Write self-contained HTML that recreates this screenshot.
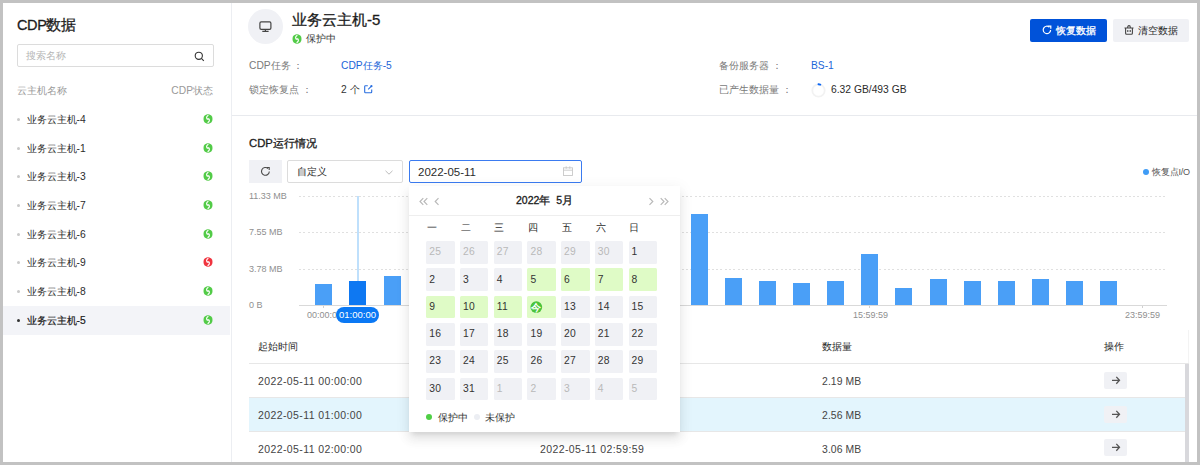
<!DOCTYPE html>
<html><head><meta charset="utf-8">
<style>
*{margin:0;padding:0;box-sizing:border-box;}
html,body{width:1200px;height:465px;overflow:hidden;background:#fff;}
body{font-family:"Liberation Sans",sans-serif;color:#1c1c1c;position:relative;}
.a{position:absolute;white-space:nowrap;line-height:12px;}
.bd{position:absolute;background:#c2c2c2;z-index:50;}
.t1{font-size:15px;font-weight:400;line-height:18px;-webkit-text-stroke:0.3px #1c1c1c;}
.md{-webkit-text-stroke:0.3px currentColor;}
.grey{color:#7a7a7a;}
.blue{color:#1b65d8;}
.s10{font-size:10.25px;}
.s11{font-size:10.5px;letter-spacing:0.4px;}
.dot{position:absolute;width:3px;height:3px;border-radius:50%;background:#cacaca;}
.nm{font-size:10.3px;color:#2b2b2b;}
.cell{position:absolute;width:28.5px;height:22.5px;background:#f0f1f5;border-radius:1.5px;font-size:10.3px;letter-spacing:0.3px;line-height:12px;color:#333;padding:5.2px 0 0 3px;}
.cell.g{background:#dffbc6;}
.cell.o{color:#b9b9b9;}
.bar{position:absolute;width:17px;background:#4a9ff7;}
.hl{position:absolute;height:1px;background:#e7e7e7;}
.arr{position:absolute;width:23px;height:17px;background:#f0f1f5;border-radius:2px;}
.arr svg{position:absolute;left:6px;top:3px;}
.grid{position:absolute;left:299px;width:868px;height:1px;background:repeating-linear-gradient(90deg,#e0e0e0 0 2px,transparent 2px 4.3px);}
.yl{position:absolute;font-size:9px;color:#8f8f8f;line-height:11px;white-space:nowrap;}
</style></head>
<body>
<!-- grey frame -->
<div class="bd" style="left:0;top:0;width:1200px;height:3px;"></div>
<div class="bd" style="left:0;top:462px;width:1200px;height:3px;"></div>
<div class="bd" style="left:0;top:0;width:3px;height:465px;"></div>
<div class="bd" style="left:1197px;top:0;width:3px;height:465px;"></div>

<!-- SIDEBAR -->
<div class="a" style="left:231px;top:3px;width:1px;height:459px;background:#eceef2;"></div>
<div class="a t1" style="left:17px;top:15.5px;font-size:14.5px;"><span style="letter-spacing:-0.4px">CDP</span>数据</div>
<div class="a" style="left:17px;top:44px;width:197px;height:23px;border:1px solid #dcdcdc;border-radius:2px;"></div>
<div class="a s10" style="left:26px;top:50px;color:#b5b5b5;">搜索名称</div>
<svg class="a" style="left:194px;top:50.5px;" width="11" height="11" viewBox="0 0 11 11"><circle cx="4.8" cy="4.8" r="3.6" fill="none" stroke="#333" stroke-width="1.1"/><path d="M7.4 7.4L9.8 9.8" stroke="#333" stroke-width="1.1"/></svg>
<div class="a s10" style="left:17px;top:85px;color:#999;">云主机名称</div>
<div class="a s10" style="right:987px;top:85px;color:#999;">CDP状态</div>

<div class="a" style="left:3px;top:306px;width:227px;height:29px;background:#f3f4f8;"></div>

<div class="dot" style="left:17px;top:117.5px;"></div>
<div class="a nm" style="left:26.5px;top:113.5px;">业务云主机-4</div>
<svg class="a" style="left:203px;top:113.5px;" width="10" height="10" viewBox="0 0 10 10"><path d="M5 0.3Q6.2 0.3 8.3 1.6Q9.5 2.6 9.5 5Q9.5 7.4 8.3 8.4Q6.2 9.7 5 9.7Q3.8 9.7 1.7 8.4Q0.5 7.4 0.5 5Q0.5 2.6 1.7 1.6Q3.8 0.3 5 0.3z" fill="#52cb47"/><path d="M5.4 1.3Q2.4 3.2 4.3 5.3M4.6 8.7Q7.6 6.8 5.7 4.7" fill="none" stroke="#fff" stroke-width="1.1"/><circle cx="5" cy="5" r="0.9" fill="#fff"/></svg>
<div class="dot" style="left:17px;top:146.5px;"></div>
<div class="a nm" style="left:26.5px;top:142.5px;">业务云主机-1</div>
<svg class="a" style="left:203px;top:142.5px;" width="10" height="10" viewBox="0 0 10 10"><path d="M5 0.3Q6.2 0.3 8.3 1.6Q9.5 2.6 9.5 5Q9.5 7.4 8.3 8.4Q6.2 9.7 5 9.7Q3.8 9.7 1.7 8.4Q0.5 7.4 0.5 5Q0.5 2.6 1.7 1.6Q3.8 0.3 5 0.3z" fill="#52cb47"/><path d="M5.4 1.3Q2.4 3.2 4.3 5.3M4.6 8.7Q7.6 6.8 5.7 4.7" fill="none" stroke="#fff" stroke-width="1.1"/><circle cx="5" cy="5" r="0.9" fill="#fff"/></svg>
<div class="dot" style="left:17px;top:175.2px;"></div>
<div class="a nm" style="left:26.5px;top:171.2px;">业务云主机-3</div>
<svg class="a" style="left:203px;top:171.2px;" width="10" height="10" viewBox="0 0 10 10"><path d="M5 0.3Q6.2 0.3 8.3 1.6Q9.5 2.6 9.5 5Q9.5 7.4 8.3 8.4Q6.2 9.7 5 9.7Q3.8 9.7 1.7 8.4Q0.5 7.4 0.5 5Q0.5 2.6 1.7 1.6Q3.8 0.3 5 0.3z" fill="#52cb47"/><path d="M5.4 1.3Q2.4 3.2 4.3 5.3M4.6 8.7Q7.6 6.8 5.7 4.7" fill="none" stroke="#fff" stroke-width="1.1"/><circle cx="5" cy="5" r="0.9" fill="#fff"/></svg>
<div class="dot" style="left:17px;top:203.9px;"></div>
<div class="a nm" style="left:26.5px;top:199.9px;">业务云主机-7</div>
<svg class="a" style="left:203px;top:199.9px;" width="10" height="10" viewBox="0 0 10 10"><path d="M5 0.3Q6.2 0.3 8.3 1.6Q9.5 2.6 9.5 5Q9.5 7.4 8.3 8.4Q6.2 9.7 5 9.7Q3.8 9.7 1.7 8.4Q0.5 7.4 0.5 5Q0.5 2.6 1.7 1.6Q3.8 0.3 5 0.3z" fill="#52cb47"/><path d="M5.4 1.3Q2.4 3.2 4.3 5.3M4.6 8.7Q7.6 6.8 5.7 4.7" fill="none" stroke="#fff" stroke-width="1.1"/><circle cx="5" cy="5" r="0.9" fill="#fff"/></svg>
<div class="dot" style="left:17px;top:232.6px;"></div>
<div class="a nm" style="left:26.5px;top:228.6px;">业务云主机-6</div>
<svg class="a" style="left:203px;top:228.6px;" width="10" height="10" viewBox="0 0 10 10"><path d="M5 0.3Q6.2 0.3 8.3 1.6Q9.5 2.6 9.5 5Q9.5 7.4 8.3 8.4Q6.2 9.7 5 9.7Q3.8 9.7 1.7 8.4Q0.5 7.4 0.5 5Q0.5 2.6 1.7 1.6Q3.8 0.3 5 0.3z" fill="#52cb47"/><path d="M5.4 1.3Q2.4 3.2 4.3 5.3M4.6 8.7Q7.6 6.8 5.7 4.7" fill="none" stroke="#fff" stroke-width="1.1"/><circle cx="5" cy="5" r="0.9" fill="#fff"/></svg>
<div class="dot" style="left:17px;top:261.3px;"></div>
<div class="a nm" style="left:26.5px;top:257.3px;">业务云主机-9</div>
<svg class="a" style="left:203px;top:257.3px;" width="10" height="10" viewBox="0 0 10 10"><path d="M5 0.3Q6.2 0.3 8.3 1.6Q9.5 2.6 9.5 5Q9.5 7.4 8.3 8.4Q6.2 9.7 5 9.7Q3.8 9.7 1.7 8.4Q0.5 7.4 0.5 5Q0.5 2.6 1.7 1.6Q3.8 0.3 5 0.3z" fill="#f0343f"/><path d="M5.4 1.3Q2.4 3.2 4.3 5.3M4.6 8.7Q7.6 6.8 5.7 4.7" fill="none" stroke="#fff" stroke-width="1.1"/><circle cx="5" cy="5" r="0.9" fill="#fff"/></svg>
<div class="dot" style="left:17px;top:290.0px;"></div>
<div class="a nm" style="left:26.5px;top:286.0px;">业务云主机-8</div>
<svg class="a" style="left:203px;top:286.0px;" width="10" height="10" viewBox="0 0 10 10"><path d="M5 0.3Q6.2 0.3 8.3 1.6Q9.5 2.6 9.5 5Q9.5 7.4 8.3 8.4Q6.2 9.7 5 9.7Q3.8 9.7 1.7 8.4Q0.5 7.4 0.5 5Q0.5 2.6 1.7 1.6Q3.8 0.3 5 0.3z" fill="#52cb47"/><path d="M5.4 1.3Q2.4 3.2 4.3 5.3M4.6 8.7Q7.6 6.8 5.7 4.7" fill="none" stroke="#fff" stroke-width="1.1"/><circle cx="5" cy="5" r="0.9" fill="#fff"/></svg>
<div class="dot" style="left:17px;top:318.7px;background:#333;"></div>
<div class="a nm" style="left:26.5px;top:314.7px;-webkit-text-stroke:0.2px #1a1a1a;color:#1a1a1a;">业务云主机-5</div>
<svg class="a" style="left:203px;top:314.7px;" width="10" height="10" viewBox="0 0 10 10"><path d="M5 0.3Q6.2 0.3 8.3 1.6Q9.5 2.6 9.5 5Q9.5 7.4 8.3 8.4Q6.2 9.7 5 9.7Q3.8 9.7 1.7 8.4Q0.5 7.4 0.5 5Q0.5 2.6 1.7 1.6Q3.8 0.3 5 0.3z" fill="#52cb47"/><path d="M5.4 1.3Q2.4 3.2 4.3 5.3M4.6 8.7Q7.6 6.8 5.7 4.7" fill="none" stroke="#fff" stroke-width="1.1"/><circle cx="5" cy="5" r="0.9" fill="#fff"/></svg>

<!-- HEADER -->
<div class="a" style="left:248px;top:9px;width:35px;height:35px;border-radius:50%;background:#f0f1f5;"></div>
<svg class="a" style="left:258px;top:20px;" width="15" height="13" viewBox="0 0 15 13"><rect x="1.9" y="1.9" width="11" height="7.4" rx="1.3" fill="none" stroke="#444" stroke-width="1.2"/><path d="M7.4 9.3v1.8M4.3 11.4h6.3" stroke="#444" stroke-width="1.2"/></svg>
<div class="a t1" style="left:292px;top:11px;">业务云主机-5</div>
<svg class="a" style="left:292px;top:34px;" width="10" height="10" viewBox="0 0 10 10"><path d="M5 0.3Q6.2 0.3 8.3 1.6Q9.5 2.6 9.5 5Q9.5 7.4 8.3 8.4Q6.2 9.7 5 9.7Q3.8 9.7 1.7 8.4Q0.5 7.4 0.5 5Q0.5 2.6 1.7 1.6Q3.8 0.3 5 0.3z" fill="#52cb47"/><path d="M5.4 1.3Q2.4 3.2 4.3 5.3M4.6 8.7Q7.6 6.8 5.7 4.7" fill="none" stroke="#fff" stroke-width="1.1"/><circle cx="5" cy="5" r="0.9" fill="#fff"/></svg>
<div class="a s10" style="left:306px;top:33px;color:#3a3a3a;">保护中</div>

<div class="a s10 grey" style="left:249px;top:59.5px;">CDP任务 ：</div>
<div class="a s10 blue" style="left:341px;top:60.3px;">CDP任务-5</div>
<div class="a s10 grey" style="left:249px;top:84px;">锁定恢复点 ：</div>
<div class="a s10" style="left:341px;top:84.3px;color:#333;">2 个</div>
<svg class="a" style="left:363.5px;top:85.3px;" width="9" height="9" viewBox="0 0 9 9"><path d="M3.8 0.8H1.4Q0.7 0.8 0.7 1.5V7.1Q0.7 7.8 1.4 7.8H7Q7.7 7.8 7.7 7.1V4.6" fill="none" stroke="#2a6fe0" stroke-width="1.1"/><path d="M4.2 4.3L7.2 1.3" fill="none" stroke="#2a6fe0" stroke-width="1.1"/><circle cx="7.4" cy="1.2" r="1.1" fill="#2a6fe0"/></svg>

<div class="a s10 grey" style="left:719px;top:59.5px;">备份服务器 ：</div>
<div class="a s10 blue" style="left:811px;top:60.3px;">BS-1</div>
<div class="a s10 grey" style="left:719px;top:84px;">已产生数据量 ：</div>
<svg class="a" style="left:811px;top:82.5px;" width="15" height="15" viewBox="0 0 15 15"><circle cx="7.5" cy="7.5" r="6.2" fill="none" stroke="#f2f2f2" stroke-width="1.8"/><path d="M7.5 1.3A6.2 6.2 0 0 1 9.3 1.6" fill="none" stroke="#0a66f5" stroke-width="1.9" stroke-linecap="round"/></svg>
<div class="a" style="left:831px;top:84px;font-size:10.3px;color:#2b2b2b;">6.32 GB/493 GB</div>

<div class="btn a" style="left:1030px;top:19px;width:77px;height:23px;background:#0052d9;border-radius:2px;"></div>
<svg class="a" style="left:1042px;top:25px;" width="10" height="10" viewBox="0 0 10 10"><path d="M8.6 5A3.7 3.7 0 1 1 7.4 2.2" fill="none" stroke="#fff" stroke-width="1.2"/><path d="M6.2 1.2h2.6v2.6" fill="none" stroke="#fff" stroke-width="1.2"/></svg>
<div class="a s10 md" style="left:1056px;top:24.5px;color:#fff;">恢复数据</div>
<div class="btn a" style="left:1113px;top:19px;width:76px;height:23px;background:#f0f1f5;border-radius:2px;"></div>
<svg class="a" style="left:1124px;top:24px;" width="10" height="11" viewBox="0 0 10 11"><path d="M0.5 4H9.5M3.7 4V3.2Q3.7 1.6 5 1.6Q6.3 1.6 6.3 3.2V4M1.6 4V9.3Q1.6 10.3 2.6 10.3H7.4Q8.4 10.3 8.4 9.3V4M3.8 6V7.9M6.2 6V7.9" fill="none" stroke="#444" stroke-width="1.1"/></svg>
<div class="a s10" style="left:1138px;top:24.5px;color:#2b2b2b;">清空数据</div>

<div class="hl" style="left:232px;top:115px;width:965px;background:#e8eaee;"></div>

<!-- CHART SECTION -->
<div class="a md" style="left:249px;top:136.3px;font-size:11.3px;line-height:14px;">CDP运行情况</div>
<div class="btn a" style="left:249px;top:160px;width:33px;height:23px;background:#f0f1f5;"></div>
<svg class="a" style="left:260px;top:166px;" width="11" height="11" viewBox="0 0 11 11"><path d="M9.3 5.5A3.9 3.9 0 1 1 8 2.5" fill="none" stroke="#4a4a4a" stroke-width="1.1"/><path d="M6.6 1.5h2.6v2.6" fill="none" stroke="#4a4a4a" stroke-width="1.1"/></svg>
<div class="a" style="left:287px;top:160px;width:116px;height:23px;border:1px solid #dcdcdc;border-radius:2px;"></div>
<div class="a s10" style="left:297px;top:166px;color:#2b2b2b;">自定义</div>
<svg class="a" style="left:385px;top:170px;" width="8" height="5" viewBox="0 0 8 5"><path d="M0.5 0.8L4 4.2 7.5 0.8" fill="none" stroke="#bbb" stroke-width="1"/></svg>
<div class="a" style="left:409px;top:160px;width:173px;height:23px;border:1px solid #3b7bf0;border-radius:2px;"></div>
<div class="a" style="left:418px;top:166px;font-size:11.5px;color:#2b2b2b;">2022-05-11</div>
<svg class="a" style="left:563px;top:166px;" width="10" height="10" viewBox="0 0 10 10"><rect x="0.5" y="1.8" width="9" height="7.7" fill="none" stroke="#c8c8c8" stroke-width="0.9"/><path d="M0.5 4.2h9M3.2 0.3v2.5M6.8 0.3v2.5" stroke="#c8c8c8" stroke-width="0.9"/></svg>

<div class="a" style="left:1143px;top:168.5px;width:6px;height:6px;border-radius:50%;background:#3f9cf6;"></div>
<div class="a" style="left:1152px;top:165.5px;font-size:9px;letter-spacing:-0.2px;color:#555;">恢复点I/O</div>

<div class="grid" style="top:196px;"></div>
<div class="grid" style="top:232px;"></div>
<div class="grid" style="top:269px;"></div>
<div class="a" style="left:299px;top:305px;width:868px;height:1px;background:#d9d9d9;"></div>
<div class="yl" style="left:249px;top:190.8px;">11.33 MB</div>
<div class="yl" style="left:249px;top:227px;">7.55 MB</div>
<div class="yl" style="left:249px;top:264px;">3.78 MB</div>
<div class="yl" style="left:249px;top:300px;">0 B</div>

<div class="a" style="left:357px;top:196px;width:2px;height:86px;background:#bfe0fc;"></div>
<div class="bar" style="left:315.3px;top:284.4px;height:20.9px;background:#4a9ff7;"></div>
<div class="bar" style="left:349.4px;top:281.0px;height:24.3px;background:#0e78f2;"></div>
<div class="bar" style="left:383.5px;top:276.3px;height:29.0px;background:#4a9ff7;"></div>
<div class="bar" style="left:417.7px;top:280.0px;height:25.3px;background:#4a9ff7;"></div>
<div class="bar" style="left:451.8px;top:280.0px;height:25.3px;background:#4a9ff7;"></div>
<div class="bar" style="left:485.9px;top:280.0px;height:25.3px;background:#4a9ff7;"></div>
<div class="bar" style="left:520.0px;top:280.0px;height:25.3px;background:#4a9ff7;"></div>
<div class="bar" style="left:554.1px;top:280.0px;height:25.3px;background:#4a9ff7;"></div>
<div class="bar" style="left:588.3px;top:280.0px;height:25.3px;background:#4a9ff7;"></div>
<div class="bar" style="left:622.4px;top:280.0px;height:25.3px;background:#4a9ff7;"></div>
<div class="bar" style="left:656.5px;top:280.0px;height:25.3px;background:#4a9ff7;"></div>
<div class="bar" style="left:690.6px;top:214.0px;height:91.3px;background:#4a9ff7;"></div>
<div class="bar" style="left:724.7px;top:277.6px;height:27.7px;background:#4a9ff7;"></div>
<div class="bar" style="left:758.9px;top:280.8px;height:24.5px;background:#4a9ff7;"></div>
<div class="bar" style="left:793.0px;top:283.0px;height:22.3px;background:#4a9ff7;"></div>
<div class="bar" style="left:827.1px;top:281.2px;height:24.1px;background:#4a9ff7;"></div>
<div class="bar" style="left:861.2px;top:254.0px;height:51.3px;background:#4a9ff7;"></div>
<div class="bar" style="left:895.3px;top:288.0px;height:17.3px;background:#4a9ff7;"></div>
<div class="bar" style="left:929.5px;top:279.4px;height:25.9px;background:#4a9ff7;"></div>
<div class="bar" style="left:963.6px;top:280.8px;height:24.5px;background:#4a9ff7;"></div>
<div class="bar" style="left:997.7px;top:280.8px;height:24.5px;background:#4a9ff7;"></div>
<div class="bar" style="left:1031.8px;top:279.4px;height:25.9px;background:#4a9ff7;"></div>
<div class="bar" style="left:1065.9px;top:280.8px;height:24.5px;background:#4a9ff7;"></div>
<div class="bar" style="left:1100.1px;top:280.8px;height:24.5px;background:#4a9ff7;"></div>

<div class="yl" style="left:307px;top:310px;">00:00:00</div>
<div class="a" style="left:336px;top:307px;width:43px;height:16px;border-radius:8px;background:#0a78f4;"></div>
<div class="a" style="left:339px;top:309px;font-size:9.5px;color:#fff;line-height:11px;">01:00:00</div>
<div class="yl" style="left:853px;top:310px;">15:59:59</div>
<div class="a" style="left:323px;top:306px;width:1px;height:2px;background:#d0d0d0;"></div>
<div class="a" style="left:869px;top:306px;width:1px;height:2px;background:#d0d0d0;"></div>
<div class="a" style="left:1142px;top:306px;width:1px;height:2px;background:#d0d0d0;"></div>
<div class="a" style="left:1188px;top:330px;width:1px;height:33px;background:#f3f3f3;"></div>
<div class="yl" style="left:1125px;top:310px;">23:59:59</div>

<!-- TABLE -->
<div class="a s10" style="left:258px;top:340.5px;color:#2b2b2b;">起始时间</div>
<div class="a s10" style="left:822px;top:340.5px;color:#2b2b2b;">数据量</div>
<div class="a s10" style="left:1104px;top:340.5px;color:#2b2b2b;">操作</div>
<div class="hl" style="left:249px;top:363px;width:940px;"></div>
<div class="a" style="left:249px;top:398px;width:936px;height:33px;background:#e3f5fd;"></div>
<div class="hl" style="left:249px;top:397px;width:936px;"></div>
<div class="hl" style="left:249px;top:431px;width:936px;"></div>
<div class="a" style="left:1185px;top:364px;width:4px;height:98px;background:#d8d8dc;"></div>

<div class="a s11" style="left:258px;top:374.5px;color:#444;">2022-05-11 00:00:00</div>
<div class="a s11" style="left:258px;top:408.5px;color:#444;">2022-05-11 01:00:00</div>
<div class="a s11" style="left:258px;top:442.5px;color:#444;">2022-05-11 02:00:00</div>
<div class="a s11" style="left:540px;top:442.5px;color:#444;">2022-05-11 02:59:59</div>
<div class="a" style="font-size:10.4px;letter-spacing:0.1px;left:822px;top:375.5px;color:#444;">2.19 MB</div>
<div class="a" style="font-size:10.4px;letter-spacing:0.1px;left:822px;top:409.5px;color:#444;">2.56 MB</div>
<div class="a" style="font-size:10.4px;letter-spacing:0.1px;left:822px;top:443.5px;color:#444;">3.06 MB</div>
<div class="arr" style="left:1104px;top:371.7px;"><svg width="11" height="11" viewBox="0 0 11 11"><path d="M2 5.3H9M6.3 1.9L9.5 5.3 6.3 8.7" fill="none" stroke="#555" stroke-width="1.3"/></svg></div>
<div class="arr" style="left:1104px;top:405.5px;"><svg width="11" height="11" viewBox="0 0 11 11"><path d="M2 5.3H9M6.3 1.9L9.5 5.3 6.3 8.7" fill="none" stroke="#555" stroke-width="1.3"/></svg></div>
<div class="arr" style="left:1104px;top:439.3px;"><svg width="11" height="11" viewBox="0 0 11 11"><path d="M2 5.3H9M6.3 1.9L9.5 5.3 6.3 8.7" fill="none" stroke="#555" stroke-width="1.3"/></svg></div>

<!-- CALENDAR POPUP -->
<div class="a" style="left:409px;top:186px;width:271px;height:246px;background:#fff;box-shadow:0 3px 14px 2px rgba(0,0,0,.05),0 8px 10px 1px rgba(0,0,0,.06),0 5px 5px -3px rgba(0,0,0,.1);border-radius:0;z-index:10;">
</div>
<div style="position:absolute;left:0;top:0;z-index:11;"><svg class="a" style="left:419px;top:197px;" width="22" height="9" viewBox="0 0 22 9"><path d="M4.3 1.1L1 4.5 4.3 7.9M8.3 1.1L5 4.5 8.3 7.9M19.5 1.1L16.2 4.5 19.5 7.9" fill="none" stroke="#b8b8b8" stroke-width="1.15"/></svg>
<svg class="a" style="left:648px;top:197px;" width="22" height="9" viewBox="0 0 22 9"><path d="M1.5 1.1L4.8 4.5 1.5 7.9M12.7 1.1L16 4.5 12.7 7.9M16.7 1.1L20 4.5 16.7 7.9" fill="none" stroke="#b8b8b8" stroke-width="1.15"/></svg>
<div class="a" style="left:516px;top:194px;font-size:10.5px;-webkit-text-stroke:0.3px #1a1a1a;color:#1a1a1a;">2022年&nbsp; 5月</div>
<div class="hl" style="left:409px;top:215px;width:271px;background:#eeeeee;"></div>
<div class="a s10" style="left:427.0px;top:222px;color:#2b2b2b;">一</div>
<div class="a s10" style="left:460.7px;top:222px;color:#2b2b2b;">二</div>
<div class="a s10" style="left:494.4px;top:222px;color:#2b2b2b;">三</div>
<div class="a s10" style="left:528.1px;top:222px;color:#2b2b2b;">四</div>
<div class="a s10" style="left:561.8px;top:222px;color:#2b2b2b;">五</div>
<div class="a s10" style="left:595.5px;top:222px;color:#2b2b2b;">六</div>
<div class="a s10" style="left:629.2px;top:222px;color:#2b2b2b;">日</div>
<div class="cell o" style="left:426.2px;top:241.2px;">25</div>
<div class="cell o" style="left:459.9px;top:241.2px;">26</div>
<div class="cell o" style="left:493.7px;top:241.2px;">27</div>
<div class="cell o" style="left:527.4px;top:241.2px;">28</div>
<div class="cell o" style="left:561.1px;top:241.2px;">29</div>
<div class="cell o" style="left:594.8px;top:241.2px;">30</div>
<div class="cell" style="left:628.6px;top:241.2px;">1</div>
<div class="cell" style="left:426.2px;top:268.4px;">2</div>
<div class="cell" style="left:459.9px;top:268.4px;">3</div>
<div class="cell" style="left:493.7px;top:268.4px;">4</div>
<div class="cell g" style="left:527.4px;top:268.4px;">5</div>
<div class="cell g" style="left:561.1px;top:268.4px;">6</div>
<div class="cell g" style="left:594.8px;top:268.4px;">7</div>
<div class="cell g" style="left:628.6px;top:268.4px;">8</div>
<div class="cell g" style="left:426.2px;top:295.8px;">9</div>
<div class="cell g" style="left:459.9px;top:295.8px;">10</div>
<div class="cell g" style="left:493.7px;top:295.8px;">11</div>
<div class="cell g" style="left:527.4px;top:295.8px;"><svg style="position:absolute;left:2.5px;top:5px;" width="13" height="13" viewBox="0 0 13 13"><circle cx="6.3" cy="6.1" r="5.9" fill="#4bc43b"/><text x="6.3" y="10" font-size="9.5" font-weight="bold" text-anchor="middle" fill="#fff">今</text></svg></div>
<div class="cell" style="left:561.1px;top:295.8px;">13</div>
<div class="cell" style="left:594.8px;top:295.8px;">14</div>
<div class="cell" style="left:628.6px;top:295.8px;">15</div>
<div class="cell" style="left:426.2px;top:323.0px;">16</div>
<div class="cell" style="left:459.9px;top:323.0px;">17</div>
<div class="cell" style="left:493.7px;top:323.0px;">18</div>
<div class="cell" style="left:527.4px;top:323.0px;">19</div>
<div class="cell" style="left:561.1px;top:323.0px;">20</div>
<div class="cell" style="left:594.8px;top:323.0px;">21</div>
<div class="cell" style="left:628.6px;top:323.0px;">22</div>
<div class="cell" style="left:426.2px;top:350.3px;">23</div>
<div class="cell" style="left:459.9px;top:350.3px;">24</div>
<div class="cell" style="left:493.7px;top:350.3px;">25</div>
<div class="cell" style="left:527.4px;top:350.3px;">26</div>
<div class="cell" style="left:561.1px;top:350.3px;">27</div>
<div class="cell" style="left:594.8px;top:350.3px;">28</div>
<div class="cell" style="left:628.6px;top:350.3px;">29</div>
<div class="cell" style="left:426.2px;top:377.7px;">30</div>
<div class="cell" style="left:459.9px;top:377.7px;">31</div>
<div class="cell o" style="left:493.7px;top:377.7px;">1</div>
<div class="cell o" style="left:527.4px;top:377.7px;">2</div>
<div class="cell o" style="left:561.1px;top:377.7px;">3</div>
<div class="cell o" style="left:594.8px;top:377.7px;">4</div>
<div class="cell o" style="left:628.6px;top:377.7px;">5</div>
<div class="a" style="left:426px;top:414.2px;width:6px;height:6px;border-radius:50%;background:#4fcf45;"></div>
<div class="a s10" style="left:438px;top:411.5px;color:#333;">保护中</div>
<div class="a" style="left:474px;top:414.2px;width:6px;height:6px;border-radius:50%;background:#eceef3;"></div>
<div class="a s10" style="left:485px;top:411.5px;color:#333;">未保护</div></div>

</body></html>
